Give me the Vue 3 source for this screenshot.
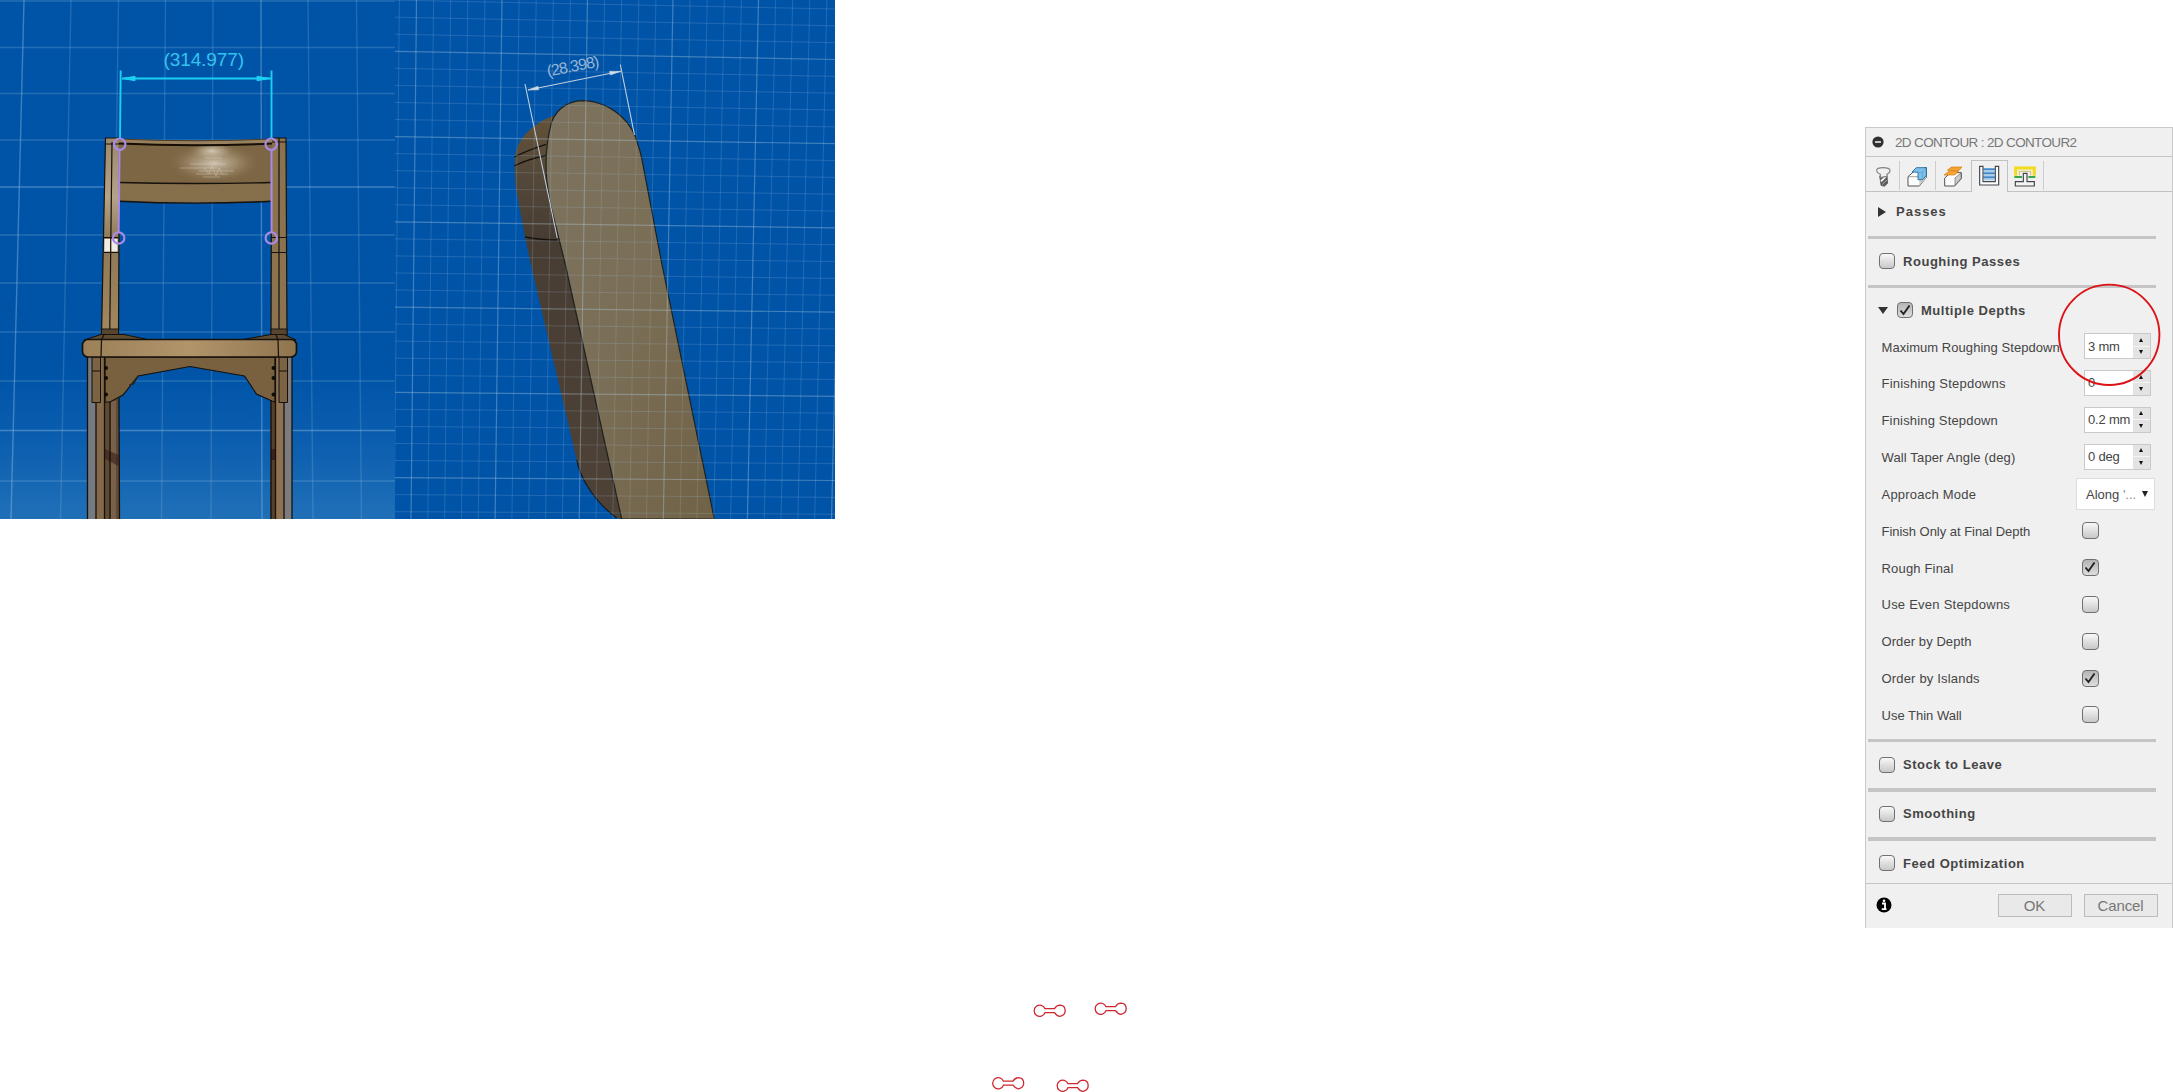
<script setup>
const rows = [
  { label: 'Maximum Roughing Stepdown', kind: 'spin', value: '3 mm', track: 0.05 },
  { label: 'Finishing Stepdowns', kind: 'spin', value: '0', track: 0.22 },
  { label: 'Finishing Stepdown', kind: 'spin', value: '0.2 mm', track: 0.17 },
  { label: 'Wall Taper Angle (deg)', kind: 'spin', value: '0 deg', track: 0.14 },
  { label: 'Approach Mode', kind: 'select', track: 0.22 },
  { label: 'Finish Only at Final Depth', kind: 'check', on: false, track: -0.03 },
  { label: 'Rough Final', kind: 'check', on: true, track: 0.18 },
  { label: 'Use Even Stepdowns', kind: 'check', on: false, track: 0.24 },
  { label: 'Order by Depth', kind: 'check', on: false, track: 0.08 },
  { label: 'Order by Islands', kind: 'check', on: true, track: 0.18 },
  { label: 'Use Thin Wall', kind: 'check', on: false, track: 0 },
]
const lower = ['Stock to Leave', 'Smoothing', 'Feed Optimization']

// perspective floor grid of the front view
const frontH = [1, 47.5, 93.5, 140, 187, 235, 283, 332, 381, 430.5, 481]
const frontV = [[24, 11], [71, 60.5], [118.5, 111], [165.5, 161.5], [213, 211], [261, 262], [308, 313], [356.5, 361.5]]

// side view grid: every fifth line is a major one
const range = (a, b) => Array.from({ length: b - a + 1 }, (_, i) => a + i)
const sideV = range(-1, 26).map(i => ({ a: 416.5 + 17.1 * i, b: 411 + 16.82 * i, major: i % 5 === 0 }))
const sideH = range(-3, 28).map(i => ({ a: 51.3 + 17.05 * i, b: 59.5 + 16.84 * i, major: i % 5 === 0 }))

const links = [[1034, 1004.5], [1095, 1002.5], [992.5, 1077], [1057, 1079.5]]
</script>

<template>
  <main class="page">
    <section class="views">
      <svg class="front" width="395" height="519" viewBox="0 0 395 519">
        <defs>
          <linearGradient id="sky" x1="0" y1="0" x2="0" y2="1">
            <stop offset="0" stop-color="#0054a8" /><stop offset=".72" stop-color="#0054a8" /><stop offset=".84" stop-color="#0a5dae" /><stop offset="1" stop-color="#2070b8" />
          </linearGradient>
          <radialGradient id="shine" cx=".5" cy=".5" r=".5">
            <stop offset="0" stop-color="#e2d8c8" stop-opacity=".8" /><stop offset=".5" stop-color="#cbbba2" stop-opacity=".4" /><stop offset="1" stop-color="#8a7251" stop-opacity="0" />
          </radialGradient>
          <linearGradient id="seat" x1="0" x2="1">
            <stop offset="0" stop-color="#9c8058" /><stop offset=".5" stop-color="#b1946a" /><stop offset="1" stop-color="#8f744e" />
          </linearGradient>
          <linearGradient id="post" x1="0" y1="0" x2="0" y2="1">
            <stop offset="0" stop-color="#9d8a6c" /><stop offset=".3" stop-color="#b5a287" /><stop offset=".52" stop-color="#8e7857" /><stop offset="1" stop-color="#a3875e" />
          </linearGradient>
        </defs>
        <rect width="395" height="519" fill="url(#sky)" />
        <g stroke="#a4c8e4" fill="none">
          <line v-for="(y, i) in frontH" :key="'h' + i" x1="0" x2="395" :y1="y" :y2="y" :opacity="i === 4 || i === 9 ? .38 : .22" stroke-width="1.4" />
          <line v-for="(p, i) in frontV" :key="'v' + i" :x1="p[0]" :x2="p[1]" y1="0" y2="519" :opacity="i === 0 || i === 5 ? .38 : .2" stroke-width="1.4" />
        </g>
        <!-- back posts -->
        <g stroke="#15110c" stroke-width="1.2">
          <path d="M105.5 138L103 260L101.500 336H118.500L119.500 138Z" fill="url(#post)" />
          <path d="M271.500 138H286L287 336H271Z" fill="#8b7350" />
          <path d="M112 142L109.700 336M279 138V336M105 144H119M272 142H286M104 237.500H118.500M271 237.500H286.500M103.500 252.500H118.500M271 252.500H286.500" fill="none" />
          <path d="M101.500 329H118.500V335H101.500ZM271 329H287V335H271Z" fill="#57452e" stroke-width=".9" />
        </g>
        <path d="M104.500 239H110V251.500H104.300ZM111.500 239H117.500V251.500H111.500Z" fill="#f1ece5" />
        <!-- backrest -->
        <path d="M119 139Q195 142.500 272 139V201Q195 205 119 201Z" fill="#7c6644" />
        <path d="M120 183Q195 185 271 183V200Q195 204 120 200Z" fill="#86704c" />
        <path d="M119 139Q195 142.500 272 139V143Q195 146 119 143Z" fill="#96805d" />
        <ellipse cx="214" cy="163" rx="46" ry="20" fill="url(#shine)" />
        <ellipse cx="212" cy="151" rx="24" ry="10" fill="url(#shine)" />
        <g stroke="#e4dccf" stroke-width=".8" opacity=".45"><path d="M190 164H226M180 168H217M199 171H234M196 174H228M205 158H222M203 177H220" /><path d="M204 168l5 6 3-8 4 10 3-8 4 7" fill="none" /></g>
        <path d="M119 143.500Q195 147 272 143.500" fill="none" stroke="#160d05" stroke-width="2" />
        <path d="M119 182.500Q195 184.500 272 182.500M119 201.300Q195 205 272 201.300" fill="none" stroke="#15110c" stroke-width="1.4" />
        <path d="M119 139Q195 142.500 272 139" fill="none" stroke="#4c3d28" />
        <!-- legs -->
        <g>
          <rect x="87.500" y="356" width="8.500" height="163" fill="#777a7e" />
          <rect x="96" y="356" width="8.500" height="163" fill="#84694a" />
          <path d="M104.500 398H118L119.500 519H104.500Z" fill="#604a33" />
          <path d="M110.500 401H116V519H110.500Z" fill="#78614a" />
          <path d="M105 449L118.500 455V466L105 459Z" fill="#3d211b" opacity=".65" />
          <rect x="270.500" y="400" width="5" height="119" fill="#574029" />
          <rect x="271" y="449" width="4" height="11" fill="#3d211b" />
          <rect x="275" y="356" width="9" height="163" fill="#8d7351" />
          <rect x="284" y="356" width="8" height="163" fill="#7a7c80" />
        </g>
        <path d="M105 357H275V402L272 401L256.500 394L244.500 376L190 366.500L138 376L123 395L110 402H105Z" fill="#79613f" stroke="#15110c" stroke-width="1.2" />
        <path d="M138 376L134 384L129 385" fill="none" stroke="#2b2115" />
        <path d="M87.500 356V519M96 402V519M104.500 356V519M110 402V519M119 398L119.500 519M271 400V519M275.500 356V519M284 402V519M292 356V519" fill="none" stroke="#15110c" stroke-width="1.3" />
        <path d="M92 357H100.500V402.500H92ZM279 357H287.500V402.500H279ZM92 371H100.500M279 371H287.500" fill="#7b6343" stroke="#15110c" />
        <g fill="#0f0b07"><circle v-for="y in [368, 378, 394.500]" :key="y" cx="106" :cy="y" r="2" /><circle v-for="y in [368, 378, 394.500]" :key="'r' + y" cx="273.500" :cy="y" r="2" /></g>
        <!-- seat -->
        <path d="M84 340L101 334.500H124L150 340ZM240 340L271 334.500H284L296 340Z" fill="#5e4b32" stroke="#15110c" />
        <rect x="82.500" y="339.500" width="214" height="17.500" rx="5.500" fill="url(#seat)" stroke="#15110c" stroke-width="1.7" />
        <path d="M104 334.500L101.500 340L101 357M276 334.500L278 340L278.500 357" fill="none" stroke="#15110c" stroke-width="1.2" />
        <!-- width dimension -->
        <g stroke="#1ccff2" stroke-width="1.900" fill="#1ccff2">
          <path d="M120.700 70.500L120 139M271.500 70.500V139M122 78.500H271" />
          <path d="M122.500 78.500L135 76.300V80.700ZM270 78.500L257 76.300V80.700Z" stroke-width="1" />
        </g>
        <text class="dim cyan" x="163.500" y="66" textLength="80.500">(314.977)</text>
        <g fill="none" stroke="#a98ae6" stroke-width="2">
          <path d="M119.500 149.500L118.700 232.500M271.500 149.500V232.500" />
          <g stroke-width="2.200"><circle cx="119.700" cy="144.200" r="5.700" /><circle cx="271.200" cy="144.200" r="5.700" /><circle cx="118.700" cy="238" r="5.700" /><circle cx="271.300" cy="238" r="5.700" /></g>
        </g>
      </svg>

      <svg class="side" width="440" height="519" viewBox="395 0 440 519">
        <defs>
          <linearGradient id="face" x1="0" y1="0" x2="1" y2="1"><stop offset="0" stop-color="#7d735e" /><stop offset=".5" stop-color="#7a6e56" /><stop offset="1" stop-color="#706246" /></linearGradient>
          <linearGradient id="edge" x1="0" y1="0" x2="0" y2="1"><stop offset="0" stop-color="#635238" /><stop offset=".15" stop-color="#54483a" /><stop offset=".3" stop-color="#483d33" /><stop offset="1" stop-color="#4e4237" /></linearGradient>
        </defs>
        <rect x="395" width="440" height="519" fill="#0054a8" />
        <path d="M553 116Q543 119 531.700 128Q519 139 516 151Q513.500 160 515.700 187L525 237L531.700 268L576.700 460Q580 475 588 487Q599 505 616.700 518L622 519V260L560 130Z" fill="url(#edge)" />
        <path d="M576.700 460Q580 475 588 487Q599 505 616.700 518" fill="none" stroke="#151b20" stroke-width="1.2" />
        <path d="M546.700 180Q544 150 551.700 121.700Q560 102 582 100.700Q604 101 621.700 116.700Q634 128 638 145Q641 153 643 165L661.700 263L714.300 519H621.700L565 263L550 203Z" fill="url(#face)" stroke="#1c211f" stroke-width="1.2" />
        <path d="M514.300 157Q528 150 546 144.300M514.300 166Q528 159 546 155.500M525 237Q540 240 557 240" fill="none" stroke="#17120e" stroke-width="1.300" />
        <g fill="none">
          <line v-for="(l, i) in sideV" :key="'v' + i" :x1="l.a" :x2="l.b" y1="0" y2="519" :class="l.major ? 'major' : 'minor'" />
          <line v-for="(l, i) in sideH" :key="'h' + i" x1="395" x2="835" :y1="l.a" :y2="l.b" :class="l.major ? 'major' : 'minor'" />
        </g>
        <g stroke="#c3d0dc" stroke-width="1.1" fill="#d3dce6">
          <path d="M525 84L557.300 238M620.300 64.500L634.500 135M528 90L620.700 71.300" fill="none" />
          <path d="M528 90L538 86.200L538.700 89.800ZM620.500 71.400L609.500 71.300L610.300 75Z" stroke-width=".6" />
        </g>
        <text class="dim pale" transform="translate(548 76.500) rotate(-11)" textLength="53">(28.398)</text>
      </svg>
    </section>

    <aside class="panel">
      <header class="title">
        <svg width="12" height="12" viewBox="0 0 12 12"><circle cx="6" cy="6" r="5.600" fill="#303030" /><path d="M3 6H9" stroke="#eee" stroke-width="1.600" /></svg>
        <span>2D CONTOUR : 2D CONTOUR2</span>
      </header>
      <nav class="tabs">
        <div class="tab first">
          <svg width="18" height="22" viewBox="48 138 54 66">
            <path d="M62 168L84 166L86 190L76 199L66 196Z" fill="#5c5c5c" stroke="#4a4a4a" stroke-width="2" />
            <path d="M66 184L80 170" stroke="#f4f4f4" stroke-width="6" /><path d="M69 194L84 180" stroke="#aaa" stroke-width="3" />
            <path d="M57 145Q72 141 88 145Q94 147 93 153Q93 158 84 163V169L64 173V163Q54 159 53 153Q53 147 57 145Z" fill="#f0f0f0" stroke="#808080" stroke-width="3.500" />
          </svg>
        </div>
        <div class="tab">
          <svg width="22" height="22" viewBox="138 136 66 66">
            <path d="M144 168L164 150L199 141V170L178 196H144Z" fill="#fcfcfc" stroke="#555" stroke-width="3" stroke-linejoin="round" />
            <path d="M178 170V195L198 172V160Z" fill="#ccc" />
            <path d="M156 154L169 141H199V164L188 177H174V155Z" fill="#7dc0ea" stroke="#17649c" stroke-width="2.500" stroke-linejoin="round" />
            <path d="M174 155H187L198 142M187 155V176" fill="none" stroke="#4a94c8" stroke-width="1.500" />
            <path d="M144 168H174" stroke="#777" stroke-width="2" />
          </svg>
        </div>
        <div class="tab">
          <svg width="22" height="22" viewBox="246 136 66 66">
            <path d="M254 172L272 156H304V174L284 196H254Z" fill="#fcfcfc" stroke="#555" stroke-width="3" stroke-linejoin="round" />
            <path d="M285 172L303 157V173L285 194Z" fill="#ccc" stroke="#666" stroke-width="2" />
            <path d="M252 163L268 151H296L284 163Z" fill="#f7a637" stroke="#d47b0b" stroke-width="2" />
            <path d="M262 149L274 139H306L296 150Z" fill="#f5a12d" stroke="#d47b0b" stroke-width="2" />
          </svg>
        </div>
        <div class="tab active">
          <svg width="22" height="22" viewBox="355 136 66 66">
            <path d="M371 149H406M371 161H406M371 173H406" stroke="#4389c8" stroke-width="5" /><path d="M371 154H406M371 166H406M371 178H406" stroke="#a9cdea" stroke-width="4" />
            <path d="M360 140H370V186H407V140H417V196H360Z" fill="#fff" stroke="#43474d" stroke-width="3.500" />
            <path d="M372 149H405M372 161H405M372 173H405" stroke="#4389c8" stroke-width="5" />
            <path d="M372 154H405M372 166H405M372 179H405" stroke="#a9cdea" stroke-width="5" />
          </svg>
        </div>
        <div class="tab last">
          <svg width="22" height="22" viewBox="462 136 66 66">
            <path d="M467 165V142H523V165" fill="none" stroke="#f2dc1a" stroke-width="9" />
            <path d="M478 164V152H512V164" fill="none" stroke="#c7a713" stroke-width="2" />
            <path d="M463 169H486M505 169H526" stroke="#37a845" stroke-width="6" />
            <path d="M490 158H501V183H523V196H466V183H490Z" fill="#f4f4f4" stroke="#43474d" stroke-width="3.500" />
          </svg>
        </div>
      </nav>

      <div class="body">
        <div class="group passes"><i class="tri right"></i><b>Passes</b></div>
        <hr />
        <div class="group"><i class="check"></i><b>Roughing Passes</b></div>
        <hr />
        <div class="group depths">
          <i class="tri down"></i>
          <i class="check on"><svg viewBox="0 0 16 16"><path d="M3.500 8.500L6.500 12L12.500 3.500" /></svg></i>
          <b>Multiple Depths</b>
        </div>
        <div v-for="r in rows" :key="r.label" class="row">
          <span class="label" :style="{ letterSpacing: r.track + 'px' }">{{ r.label }}</span>
          <div v-if="r.kind === 'spin'" class="spin">
            <span>{{ r.value }}</span>
            <div class="steps"><i><em class="up"></em></i><i><em class="dn"></em></i></div>
          </div>
          <div v-else-if="r.kind === 'select'" class="select"><span>Along <small>'...</small></span><em></em></div>
          <i v-else class="check" :class="{ on: r.on }"><svg v-if="r.on" viewBox="0 0 16 16"><path d="M3.500 8.500L6.500 12L12.500 3.500" /></svg></i>
        </div>
        <div class="gap"></div>
        <template v-for="name in lower" :key="name">
          <hr />
          <div class="group"><i class="check"></i><b>{{ name }}</b></div>
        </template>
      </div>

      <footer class="foot">
        <svg width="16" height="16" viewBox="0 0 16 16"><circle cx="8" cy="8" r="7.500" fill="#000" /><path d="M6 6.500H9V12M5.800 12.200H10.500" fill="none" stroke="#fff" stroke-width="1.800" /><circle cx="8" cy="3.800" r="1.300" fill="#fff" /></svg>
        <button class="ok">OK</button>
        <button>Cancel</button>
      </footer>
    </aside>

    <svg class="marks" width="2173" height="1092" viewBox="0 0 2173 1092">
      <circle cx="2109.200" cy="334.800" r="50.200" fill="none" stroke="#dd1216" stroke-width="1.900" />
      <g v-for="(p, i) in links" :key="i" :transform="`translate(${p[0]} ${p[1]})`">
        <path d="M11 4.200A5.600 5.600 0 1 0 11 8.200H20.500Q23 11.800 26 11.800Q31.200 10.500 31.200 6.200Q31 .8 26 .7Q22.500 .8 20.500 4.200Z" fill="none" stroke="#cf2731" stroke-width="1.300" />
      </g>
    </svg>
  </main>
</template>

<style>
body { background: #fff; overflow: hidden; }
</style>
<style scoped>
.page { position: relative; width: 2173px; height: 1092px; display: flex; justify-content: space-between; align-items: flex-start; font-family: "Liberation Sans", Arial, sans-serif; color: #484848; background: #fff; overflow: hidden; }
.views { display: flex; height: 518.500px; overflow: hidden; }
.views svg { display: block; }
.dim { font-family: "Liberation Sans", Arial, sans-serif; }
.cyan { font-size: 19px; fill: #35c3ee; }
.pale { font-size: 16px; fill: #98b5d5; }
.major { stroke: #b4cfe0; stroke-width: 1.2; opacity: .36; }
.minor { stroke: #a4c4dc; stroke-width: 1; opacity: .2; }
.marks { position: absolute; left: 0; top: 0; pointer-events: none; }

.panel { box-sizing: border-box; width: 308px; height: 801px; margin-top: 127px; background: #f0f0f0; border: 1px solid #c9c9c9; border-bottom: 0; display: flex; flex-direction: column; }
.title { box-sizing: border-box; flex: none; height: 29px; border-bottom: 1px solid #c6c6c6; display: flex; align-items: center; padding-left: 6px; font-size: 13.500px; letter-spacing: -.64px; color: #777; }
.title span { margin-left: 11px; }
.tabs { flex: none; box-sizing: border-box; height: 35px; display: flex; align-items: stretch; border-bottom: 1px solid #c2c2c2; padding-top: 3px; }
.tab { box-sizing: border-box; width: 36px; height: 29px; margin-top: 1px; border-right: 1px solid #ccc; display: flex; align-items: center; justify-content: center; padding: 3px 2px 0 0; }
.tab.first { width: 34px; padding: 3px 0 0 3px; }
.tab.active { width: 37px; height: 32px; margin: 0 0 -1px -1px; border: 1px solid #c2c2c2; border-bottom: 0; background: #f0f0f0; padding: 0 1px 1px 0; }
.body { flex: none; height: 691px; display: flex; flex-direction: column; color: #454545; }
hr { flex: none; box-sizing: border-box; width: 288px; height: 3.500px; border: 0; margin: 0 0 0 1.500px; background: #c5c5c5; }
.group { flex: none; box-sizing: border-box; height: 45.700px; display: flex; align-items: center; padding: 0 0 1px 13px; }
.group b { font-size: 13px; letter-spacing: .54px; margin-left: 8px; }
.passes { height: 43.500px; padding-bottom: 4px; }
.passes b { letter-spacing: 1px; margin-left: 10px; }
.depths { height: 40.400px; padding: 4px 0 0 12px; }
.depths .check { margin-left: 9px; }
.tri { width: 0; height: 0; }
.tri.right { border-left: 8px solid #333; border-top: 5px solid transparent; border-bottom: 5px solid transparent; margin-left: -1px; }
.tri.down { border-top: 7px solid #333; border-left: 5.500px solid transparent; border-right: 5.500px solid transparent; }
.check { box-sizing: border-box; flex: none; display: block; width: 16px; height: 16px; border: 1.500px solid #707070; border-radius: 4px; background: linear-gradient(#f8f8f8, #c8c8c8); }
.check.on { background: linear-gradient(#b4b4b4, #dedede); }
.check svg { display: block; width: 16px; height: 16px; margin: -1px 0 0 -1px; }
.check path { fill: none; stroke: #222; stroke-width: 1.900; }
.row { flex: none; height: 36.850px; display: flex; align-items: center; padding-left: 15.500px; }
.label { width: 200.500px; font-size: 13px; white-space: nowrap; }
.row .check { margin: -1px 0 0; width: 17px; height: 17px; }
.spin { box-sizing: border-box; width: 67px; height: 26px; margin: -2px 0 0 2px; border: 1px solid #c9c9c9; background: #fff; display: flex; justify-content: space-between; align-items: center; font-size: 13px; letter-spacing: -.2px; padding-left: 3px; }
.spin span { white-space: nowrap; }
.steps { flex: none; width: 17px; height: 24px; display: flex; flex-direction: column; gap: 1px; background: #f5f5f5; }
.steps i { flex: 1; background: #e3e3e3; display: flex; align-items: center; justify-content: center; padding-right: 2px; }
.steps em { width: 0; height: 0; border-left: 2.500px solid transparent; border-right: 2.500px solid transparent; }
.steps .up { border-bottom: 4px solid #111; }
.steps .dn { border-top: 4px solid #111; }
.select { box-sizing: border-box; width: 79px; height: 32px; margin-left: -6px; border: 1.500px solid #dcdcdc; background: #fff; display: flex; align-items: center; justify-content: space-between; font-size: 13px; padding: 0 6px 0 9px; }
.select small { font-size: 13px; color: #888; }
.select em { width: 0; height: 0; border-left: 3.500px solid transparent; border-right: 3.500px solid transparent; border-top: 6px solid #222; }
.gap { flex: none; height: 5px; }
.foot { box-sizing: border-box; flex: 1; border-top: 1px solid #c6c6c6; display: flex; align-items: flex-start; padding: 10px 14px 0 10px; }
.foot svg { margin: 3px auto 0 0; }
button { box-sizing: border-box; width: 74px; height: 23px; margin: 0; padding: 0 1px 1px 0; border: 1px solid #bcbcbc; background: #e9e9e9; font: 15px "Liberation Sans", Arial, sans-serif; letter-spacing: -.1px; color: #777; }
.ok { margin-right: 12px; }
</style>
